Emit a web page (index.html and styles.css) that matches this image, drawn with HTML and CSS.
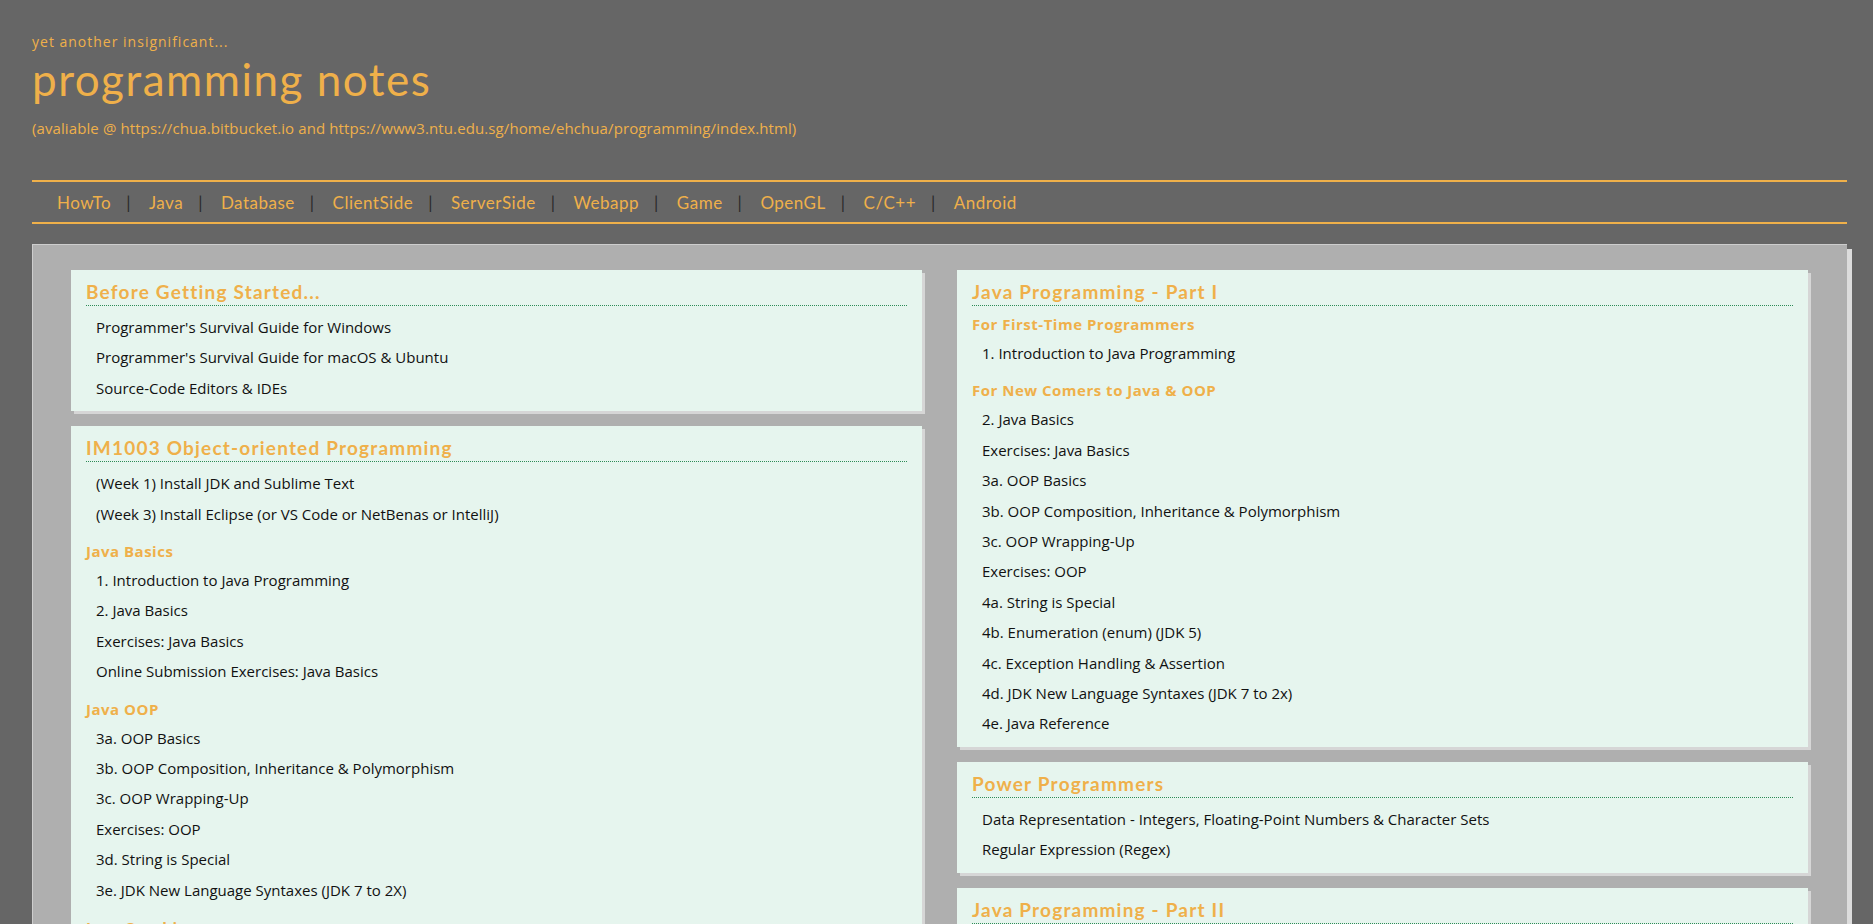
FILE: index.html
```html
<!DOCTYPE html>
<html lang="en">
<head>
<meta charset="utf-8">
<title>programming notes</title>
<link rel="stylesheet" href="styles.css">
</head>
<body>
<div class="page">
  <header class="masthead">
    <p class="tagline">yet another insignificant...</p>
    <h1 class="site-title">programming notes</h1>
    <p class="avail">(avaliable @ https://chua.bitbucket.io and https://www3.ntu.edu.sg/home/ehchua/programming/index.html)</p>
  </header>

  <nav class="topnav">
    <a href="#">HowTo</a><span class="sep">|</span>
    <a href="#">Java</a><span class="sep">|</span>
    <a href="#">Database</a><span class="sep">|</span>
    <a href="#">ClientSide</a><span class="sep">|</span>
    <a href="#">ServerSide</a><span class="sep">|</span>
    <a href="#">Webapp</a><span class="sep">|</span>
    <a href="#">Game</a><span class="sep">|</span>
    <a href="#">OpenGL</a><span class="sep">|</span>
    <a href="#">C/C++</a><span class="sep">|</span>
    <a href="#">Android</a>
  </nav>

  <main class="board">
    <div class="column">
      <section class="card">
        <h2>Before Getting Started...</h2>
        <div class="body">
          <ul>
            <li><a href="#">Programmer's Survival Guide for Windows</a></li>
            <li><a href="#">Programmer's Survival Guide for macOS &amp; Ubuntu</a></li>
            <li><a href="#">Source-Code Editors &amp; IDEs</a></li>
          </ul>
        </div>
      </section>

      <section class="card">
        <h2>IM1003 Object-oriented Programming</h2>
        <div class="body">
          <ul>
            <li><a href="#">(Week 1) Install JDK and Sublime Text</a></li>
            <li><a href="#">(Week 3) Install Eclipse (or VS Code or NetBenas or IntelliJ)</a></li>
          </ul>
          <h3>Java Basics</h3>
          <ul>
            <li><a href="#">1. Introduction to Java Programming</a></li>
            <li><a href="#">2. Java Basics</a></li>
            <li><a href="#">Exercises: Java Basics</a></li>
            <li><a href="#">Online Submission Exercises: Java Basics</a></li>
          </ul>
          <h3>Java OOP</h3>
          <ul>
            <li><a href="#">3a. OOP Basics</a></li>
            <li><a href="#">3b. OOP Composition, Inheritance &amp; Polymorphism</a></li>
            <li><a href="#">3c. OOP Wrapping-Up</a></li>
            <li><a href="#">Exercises: OOP</a></li>
            <li><a href="#">3d. String is Special</a></li>
            <li><a href="#">3e. JDK New Language Syntaxes (JDK 7 to 2X)</a></li>
          </ul>
          <h3>Java Graphics</h3>
          <ul>
            <li><a href="#">5. Graphics Programming</a></li>
            <li><a href="#">Exercises: Graphics Programming</a></li>
          </ul>
        </div>
      </section>
    </div>

    <div class="column">
      <section class="card">
        <h2>Java Programming - Part I</h2>
        <div class="body">
          <h3>For First-Time Programmers</h3>
          <ul>
            <li><a href="#">1. Introduction to Java Programming</a></li>
          </ul>
          <h3>For New Comers to Java &amp; OOP</h3>
          <ul>
            <li><a href="#">2. Java Basics</a></li>
            <li><a href="#">Exercises: Java Basics</a></li>
            <li><a href="#">3a. OOP Basics</a></li>
            <li><a href="#">3b. OOP Composition, Inheritance &amp; Polymorphism</a></li>
            <li><a href="#">3c. OOP Wrapping-Up</a></li>
            <li><a href="#">Exercises: OOP</a></li>
            <li><a href="#">4a. String is Special</a></li>
            <li><a href="#">4b. Enumeration (enum) (JDK 5)</a></li>
            <li><a href="#">4c. Exception Handling &amp; Assertion</a></li>
            <li><a href="#">4d. JDK New Language Syntaxes (JDK 7 to 2x)</a></li>
            <li><a href="#">4e. Java Reference</a></li>
          </ul>
        </div>
      </section>

      <section class="card">
        <h2>Power Programmers</h2>
        <div class="body">
          <ul>
            <li><a href="#">Data Representation - Integers, Floating-Point Numbers &amp; Character Sets</a></li>
            <li><a href="#">Regular Expression (Regex)</a></li>
          </ul>
        </div>
      </section>

      <section class="card">
        <h2>Java Programming - Part II</h2>
        <div class="body">
          <ul>
            <li><a href="#">5. Graphics Programming</a></li>
            <li><a href="#">6. Generics</a></li>
          </ul>
        </div>
      </section>
    </div>
  </main>
</div>
</body>
</html>
```

FILE: styles.css
```css
html, body {
  margin: 0;
  padding: 0;
}

body {
  background: #666666;
  font-family: "Open Sans", "Noto Sans", sans-serif;
  color: #111111;
}

.page {
  padding: 32px 26px 40px 32px;
}

/* ---------- masthead ---------- */
.masthead p,
.masthead h1 {
  margin: 0;
}

.tagline {
  font-size: 14px;
  line-height: 20px;
  letter-spacing: 1px;
  color: #efb04a;
}

.site-title {
  margin-top: 3px !important;
  font-family: "Lato", sans-serif;
  font-weight: 400;
  font-size: 44px;
  line-height: 48px;
  letter-spacing: 1.5px;
  color: #efb04a;
}

.avail {
  margin-top: 15px !important;
  font-size: 15px;
  line-height: 20px;
  letter-spacing: 0.1px;
  color: #efb04a;
}

/* ---------- nav ---------- */
.topnav {
  margin-top: 42px;
  border-top: 2px solid #efb04a;
  border-bottom: 2px solid #efb04a;
  height: 40px;
  display: flex;
  align-items: center;
  padding-left: 25px;
  font-family: "Lato", sans-serif;
  font-weight: 400;
  font-size: 17px;
  letter-spacing: 0.5px;
}

.topnav a {
  color: #efb04a;
  text-decoration: none;
}

.topnav .sep {
  color: #2a2a2a;
  margin: 0 18px 0 15px;
}

/* ---------- board ---------- */
.board {
  margin-top: 20px;
  background: #afafaf;
  border-top: 1px solid #cdcdcd;
  border-left: 1px solid #cdcdcd;
  box-shadow: 5px 5px 0 #dcdcdc;
  padding: 25px 39px 30px 38px;
  display: grid;
  grid-template-columns: 1fr 1fr;
  column-gap: 35px;
  align-items: start;
}

.column {
  display: flex;
  flex-direction: column;
  gap: 15px;
}

.card {
  background: #e6f5ee;
  box-shadow: 3px 3px 0 #d6d6d6;
  padding: 8px 15px 8px 15px;
}

.card h2 {
  margin: 0;
  font-family: "Lato", sans-serif;
  font-weight: 700;
  font-size: 19px;
  line-height: 27px;
  letter-spacing: 1.2px;
  color: #efb04a;
  border-bottom: 1px dotted #2e8b57;
}

.card .body {
  padding-top: 6px;
}

.card h3 {
  margin: 10px 0 2px;
  font-size: 15px;
  font-weight: 700;
  line-height: 24px;
  letter-spacing: 0.5px;
  color: #efb04a;
}

.card .body > h3:first-child {
  margin-top: 0;
}

.card ul {
  list-style: none;
  margin: 0;
  padding: 0 0 0 10px;
}

.card li {
  font-size: 15px;
  line-height: 30.4px;
}

.card li a {
  color: #111111;
  text-decoration: none;
}
```
